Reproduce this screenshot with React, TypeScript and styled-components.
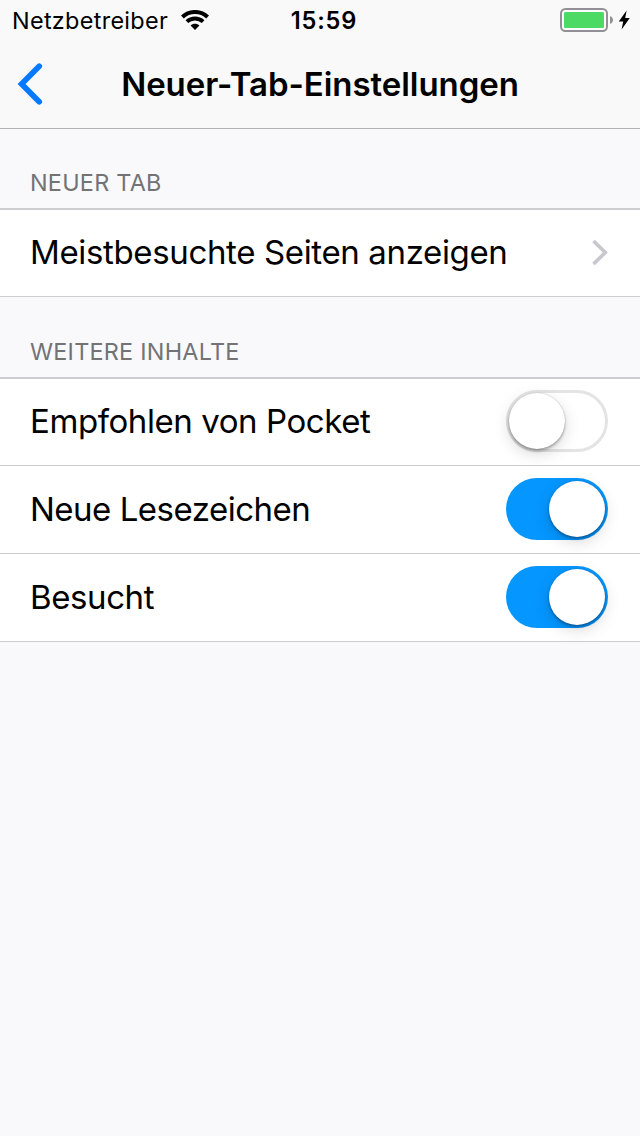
import React, { useState } from "react";
import styled, { createGlobalStyle } from "styled-components";

const GlobalStyle = createGlobalStyle`
  * { box-sizing: border-box; }
  body {
    margin: 0;
    background: #f9f9fb;
    font-family: Inter, "Liberation Sans", sans-serif;
    color: #000;
  }
`;

const Screen = styled.main`
  display: flex;
  flex-direction: column;
  min-height: 1136px;
  background: #f9f9fb;
`;

const TopArea = styled.header`
  height: 129px;
  background: #f9f9f9;
  border-bottom: 1px solid #b2b2b2;
`;

const StatusBar = styled.div`
  display: grid;
  grid-template-columns: 1fr auto 1fr;
  align-items: center;
  height: 40px;
  padding: 0 10px 0 12px;
`;

const Carrier = styled.div`
  display: flex;
  align-items: center;
  gap: 13px;
  font-size: 23.4px;
  line-height: 38px;
  letter-spacing: 0.32px;
`;

const CarrierName = styled.span`
  padding-top: 2px;
`;

const Clock = styled.div`
  padding: 2px 0 0 6px;
  font-size: 23.6px;
  font-weight: 600;
  line-height: 38px;
  letter-spacing: 0.85px;
`;

const Power = styled.div`
  display: flex;
  align-items: center;
  justify-content: flex-end;
  gap: 5px;
`;

const NavBar = styled.div`
  display: grid;
  grid-template-columns: 60px 1fr 60px;
  align-items: center;
  height: 88px;
`;

const BackButton = styled.button`
  display: flex;
  align-items: center;
  height: 88px;
  padding: 0 0 0 16px;
  border: 0;
  background: none;
`;

const Title = styled.h1`
  margin: 0;
  font-size: 33px;
  font-weight: 600;
  line-height: 88px;
  letter-spacing: -0.06px;
  text-align: center;
  white-space: nowrap;
`;

const SectionHeader = styled.h2<{ $first?: boolean }>`
  margin: 0;
  height: ${(p) => (p.$first ? 79 : 80)}px;
  padding: ${(p) => (p.$first ? 39 : 40)}px 30px 0;
  font-size: 23.4px;
  font-weight: 400;
  line-height: 30px;
  letter-spacing: 0.25px;
  color: #737376;
`;

const Group = styled.section`
  border-top: 2px solid #cdcdcf;
`;

const Row = styled.div`
  display: flex;
  align-items: center;
  justify-content: space-between;
  height: 88px;
  padding: 0 32px 0 30px;
  background: #fff;
  border-bottom: 1px solid #cdcdcf;

  &:first-child { height: 87px; }
`;

const Label = styled.span<{ $tracking: number }>`
  padding-bottom: 2px;
  font-size: 33px;
  line-height: 40px;
  letter-spacing: ${(p) => p.$tracking}px;
  white-space: nowrap;
`;

const Track = styled.button<{ $on: boolean }>`
  width: 102px;
  height: 62px;
  margin-bottom: 2px;
  padding: ${(p) => (p.$on ? "3px 3px 3px 43px" : "0")};
  border: ${(p) => (p.$on ? "0" : "3px solid #e4e4e4")};
  border-radius: 31px;
  background: ${(p) => (p.$on ? "#0596ff" : "#fff")};
`;

const Knob = styled.span`
  display: block;
  width: 56px;
  height: 56px;
  border-radius: 50%;
  background: #fff;
  box-shadow: 0 5px 16px rgba(0, 0, 0, 0.15), 0 2px 3px rgba(0, 0, 0, 0.3),
    0 0 1px rgba(0, 0, 0, 0.25);
`;

const WifiIcon = () => (
  <svg width="28" height="20" viewBox="0 0 28 20" fill="none" stroke="#000">
    <path d="M1.4 7C8.4 0.3 19.6 0.3 26.6 7" strokeWidth="4" />
    <path d="M5.9 11.7C10.4 7.4 17.6 7.4 22.1 11.7" strokeWidth="3.8" />
    <path d="M14 20L9.6 15.6C12 13.2 16 13.2 18.4 15.6Z" fill="#000" stroke="none" />
  </svg>
);

const BatteryIcon = () => (
  <svg width="53" height="24" viewBox="0 0 53 24">
    <rect x="1" y="1" width="46" height="22" rx="4.5" fill="#fff" stroke="#929096" strokeWidth="2" />
    <rect x="4" y="4" width="40" height="16" rx="1.5" fill="#4cd964" />
    <path d="M50 8C54 9.5 54 14.5 50 16Z" fill="#929096" />
  </svg>
);

const BoltIcon = () => (
  <svg width="12" height="20" viewBox="0 0 12 20">
    <path d="M8.6 0.4L0.8 11.4H5.2L3.6 19.6L11.8 8H7.2Z" fill="#000" />
  </svg>
);

const BackIcon = () => (
  <svg width="28" height="44" viewBox="0 0 28 44" fill="none">
    <path d="M23.2 4.2L5.6 22L23.2 39.8" stroke="#057aff" strokeWidth="5.7" strokeLinecap="round" />
  </svg>
);

const ChevronIcon = () => (
  <svg width="16" height="26" viewBox="0 0 16 26" fill="none">
    <path d="M1.5 1L13.3 12.5L1.5 24" stroke="#c7c7cc" strokeWidth="3.6" />
  </svg>
);

function Toggle({ initial, label }: { initial: boolean; label: string }) {
  const [on, setOn] = useState(initial);
  return (
    <Track $on={on} role="switch" aria-checked={on} aria-label={label} onClick={() => setOn(!on)}>
      <Knob />
    </Track>
  );
}

const contents = [
  { label: "Empfohlen von Pocket", on: false, tracking: -0.43 },
  { label: "Neue Lesezeichen", on: true, tracking: -0.5 },
  { label: "Besucht", on: true, tracking: -0.4 },
];

export default function App() {
  return (
    <Screen>
      <GlobalStyle />
      <TopArea>
        <StatusBar>
          <Carrier>
            <CarrierName>Netzbetreiber</CarrierName>
            <WifiIcon />
          </Carrier>
          <Clock>15:59</Clock>
          <Power>
            <BatteryIcon />
            <BoltIcon />
          </Power>
        </StatusBar>
        <NavBar>
          <BackButton aria-label="Zurück">
            <BackIcon />
          </BackButton>
          <Title>Neuer-Tab-Einstellungen</Title>
        </NavBar>
      </TopArea>
      <SectionHeader $first>NEUER TAB</SectionHeader>
      <Group>
        <Row>
          <Label $tracking={-0.36}>Meistbesuchte Seiten anzeigen</Label>
          <ChevronIcon />
        </Row>
      </Group>
      <SectionHeader>WEITERE INHALTE</SectionHeader>
      <Group>
        {contents.map((item) => (
          <Row key={item.label}>
            <Label $tracking={item.tracking}>{item.label}</Label>
            <Toggle initial={item.on} label={item.label} />
          </Row>
        ))}
      </Group>
    </Screen>
  );
}
